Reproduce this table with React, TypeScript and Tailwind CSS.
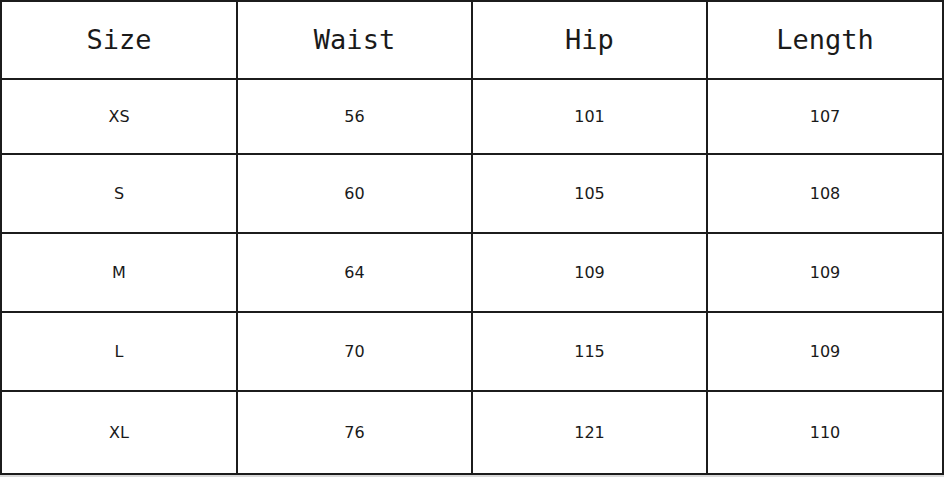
const headers = ["Size", "Waist", "Hip", "Length"];

const rows = [
  { size: "XS", waist: "56", hip: "101", length: "107", h: "h-[75px]" },
  { size: "S", waist: "60", hip: "105", length: "108", h: "h-[79px]" },
  { size: "M", waist: "64", hip: "109", length: "109", h: "h-[79px]" },
  { size: "L", waist: "70", hip: "115", length: "109", h: "h-[79px]" },
  { size: "XL", waist: "76", hip: "121", length: "110", h: "h-[83px]" },
];

const cols = "grid grid-cols-[236px_235px_235px_236px]";

export default function App() {
  return (
    <div className="w-[944px] h-[477px] bg-[#d9d9d9] overflow-hidden">
      <div className="bg-white border-l-2 border-t-2 border-[#1c1c1c]">
        {/* header */}
        <div className={cols}>
          {headers.map((h) => (
            <div
              key={h}
              className="h-[78px] flex items-center justify-center border-r-2 border-b-2 border-[#1c1c1c] text-[27px] text-[#1a1a1a] font-['DejaVu_Sans_Mono',monospace]"
            >
              {h}
            </div>
          ))}
        </div>
        {rows.map((r) => (
          <div key={r.size} className={cols}>
            {[r.size, r.waist, r.hip, r.length].map((v, i) => (
              <div
                key={i}
                className={`${r.h} flex items-center justify-center border-r-2 border-b-2 border-[#1c1c1c] text-[16px] text-[#1a1a1a] font-['DejaVu_Sans',sans-serif]`}
              >
                {v}
              </div>
            ))}
          </div>
        ))}
      </div>
    </div>
  );
}
